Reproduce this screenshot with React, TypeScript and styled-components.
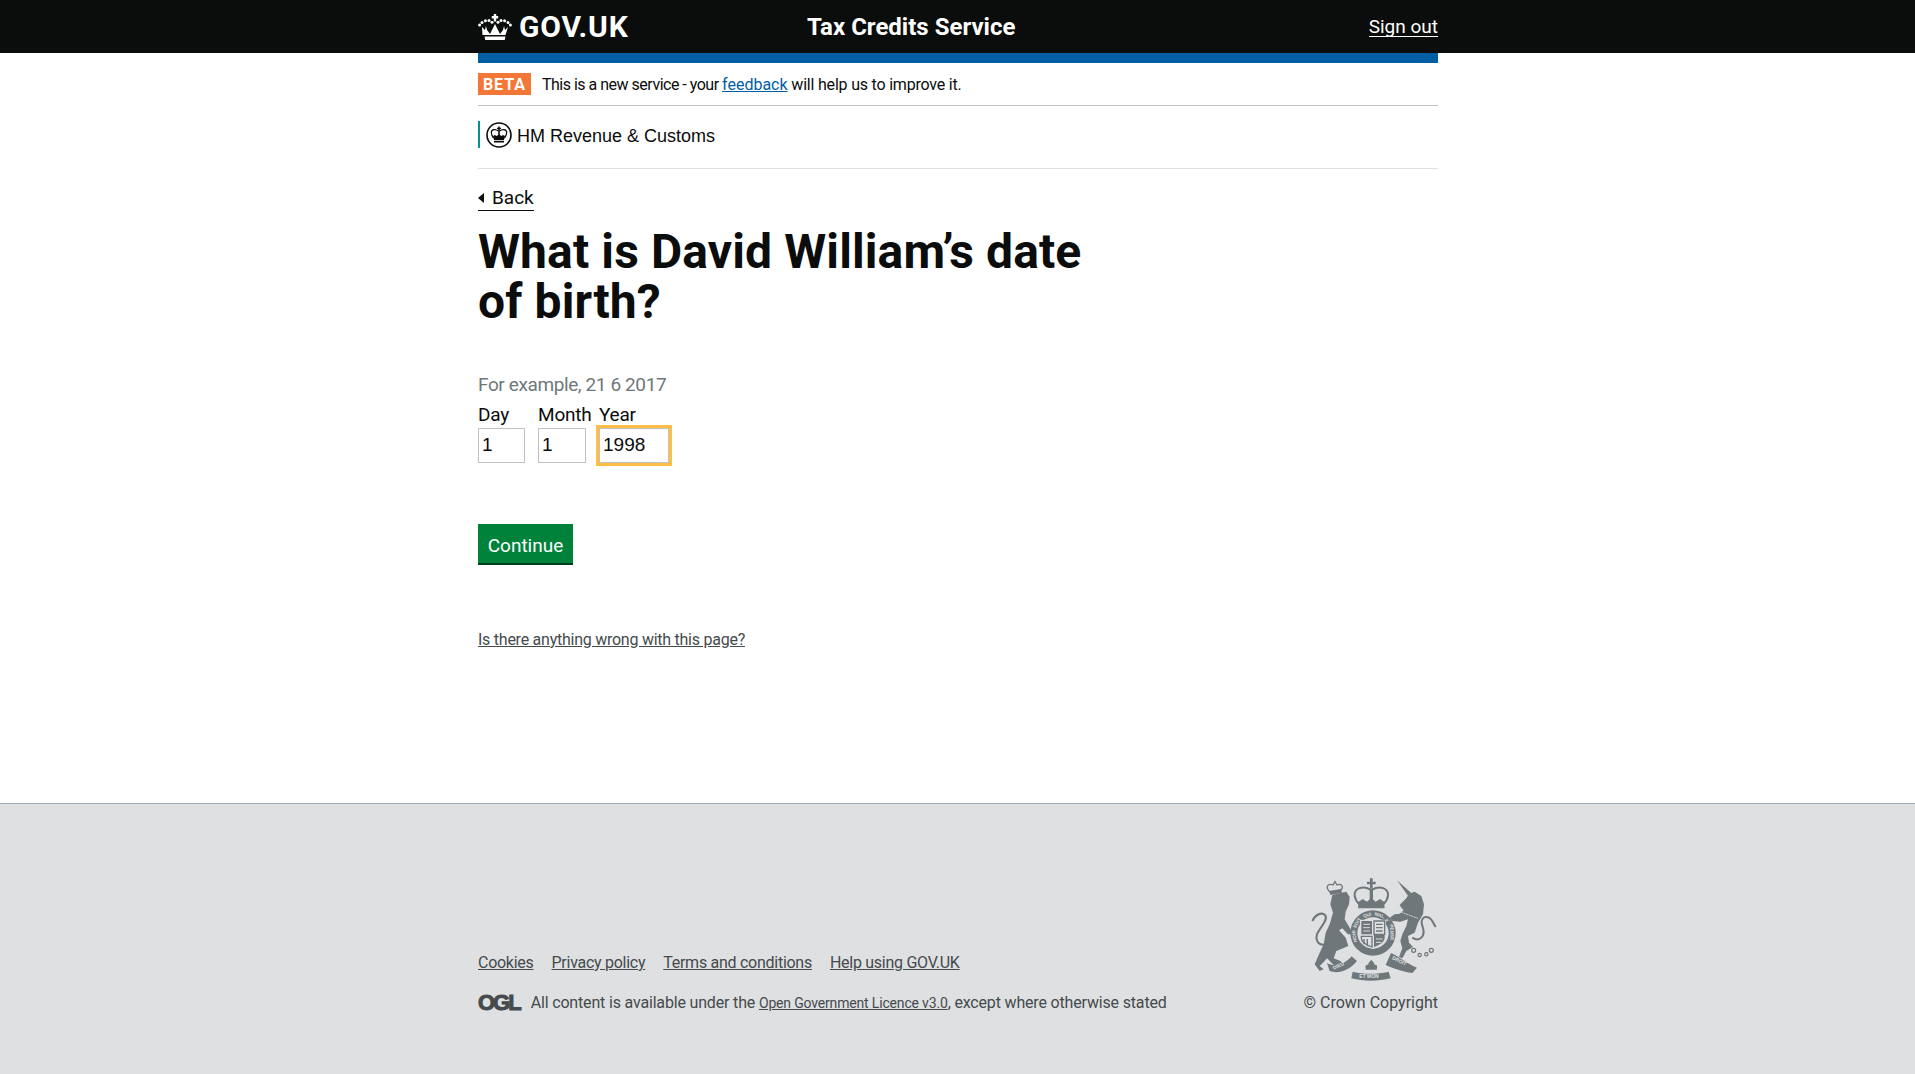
import styled, { createGlobalStyle } from "styled-components";

const GlobalStyle = createGlobalStyle`
  html, body { margin: 0; padding: 0; background: #fff; }
  body { font-family: Roboto, "Liberation Sans", sans-serif; color: #0b0c0c; }
`;

const Page = styled.div`
  display: flex;
  flex-direction: column;
  min-height: 1074px;
`;

const Wrap = styled.div`
  width: 960px;
  margin: 0 auto 0 478px;
`;

const TopBar = styled.header`
  background: #0b0c0c;
  height: 53px;
  color: #fff;
`;

const TopInner = styled(Wrap)`
  display: flex;
  align-items: center;
  height: 53px;
`;

const Brand = styled.div`
  display: flex;
  align-items: center;
  gap: 7px;
  width: 329px;
  font-size: 30px;
  font-weight: 700;
  letter-spacing: 0.8px;
`;

const ServiceName = styled.div`
  font-size: 24px;
  font-weight: 700;
  flex: 1;
`;

const SignOut = styled.a`
  font-size: 19px;
  color: #fff;
  text-decoration: none;
  border-bottom: 1px solid #fff;
  line-height: 19px;
`;

const BlueBar = styled(Wrap)`
  height: 10px;
  background: #005ea5;
`;

const BetaRow = styled(Wrap)`
  display: flex;
  align-items: center;
  height: 42px;
  border-bottom: 1px solid #bfc1c3;
  font-size: 16px;
  letter-spacing: -0.5px;
`;

const BetaTag = styled.span`
  background: #f47738;
  color: #fff;
  font-weight: 700;
  font-size: 16px;
  letter-spacing: 1px;
  width: 53px;
  height: 22px;
  line-height: 23px;
  text-align: center;
  margin-right: 11px;
`;

const FeedbackLink = styled.a`
  color: #005ea5;
  text-decoration: underline;
  letter-spacing: 0;
`;

const BetaTail = styled.span`
  letter-spacing: -0.2px;
`;

const DeptRow = styled(Wrap)`
  box-sizing: border-box;
  height: 63px;
  padding-top: 15px;
  border-bottom: 1px solid #dee0e2;
`;

const DeptMark = styled.div`
  display: flex;
  align-items: center;
  gap: 5px;
  border-left: 2px solid #009390;
  padding-left: 6px;
  height: 27px;
  font-family: "Liberation Sans", Arial, sans-serif;
  font-size: 18px;
`;

const DeptName = styled.span`
  padding-top: 3px;
`;

const Main = styled(Wrap)`
  padding-top: 17px;
  flex: 1;
`;

const BackLink = styled.a`
  display: inline-block;
  position: relative;
  font-size: 19px;
  line-height: 24px;
  padding-left: 14px;
  color: #0b0c0c;
  border-bottom: 1px solid #0b0c0c;
  &::before {
    content: "";
    position: absolute;
    left: 0;
    top: 7px;
    border-style: solid;
    border-width: 5px 6px 5px 0;
    border-color: transparent #0b0c0c transparent transparent;
  }
`;

const Heading = styled.h1`
  width: 640px;
  margin: 16px 0 0;
  font-size: 48px;
  line-height: 50px;
  font-weight: 700;
  letter-spacing: 0.12px;
`;

const Hint = styled.div`
  margin-top: 45px;
  font-size: 19px;
  line-height: 25px;
  color: #6f777b;
  letter-spacing: -0.39px;
`;

const DateFields = styled.div`
  display: flex;
  margin-top: 5px;
`;

const Field = styled.label<{ $width: number }>`
  display: flex;
  flex-direction: column;
  width: ${(p) => p.$width}px;
  font-size: 19px;
  line-height: 25px;
  letter-spacing: -0.2px;
`;

const Input = styled.input<{ $width: number; $focused?: boolean }>`
  box-sizing: border-box;
  width: ${(p) => p.$width}px;
  height: 35px;
  margin-top: 1px;
  padding: 0 3px 2px;
  border: 1px solid #bfc1c3;
  font-family: "Liberation Sans", Arial, sans-serif;
  font-size: 19px;
  color: #0b0c0c;
  background: #fff;
  outline: ${(p) => (p.$focused ? "3px solid #ffbf47" : "none")};
`;

const ContinueButton = styled.button`
  display: block;
  margin-top: 61px;
  width: 95px;
  height: 41px;
  padding: 2px 0 0;
  border: 0;
  box-shadow: inset 0 -2px 0 #00401e;
  background: #00823b;
  color: #fff;
  font-family: inherit;
  font-size: 19px;
`;

const ProblemLink = styled.a`
  display: inline-block;
  margin-top: 65px;
  font-size: 16px;
  line-height: 19px;
  color: #454a4c;
  text-decoration: underline;
  letter-spacing: -0.25px;
`;

const Footer = styled.footer`
  box-sizing: border-box;
  height: 271px;
  background: #dee0e2;
  border-top: 1px solid #a1acb2;
`;

const FooterInner = styled(Wrap)`
  display: flex;
  justify-content: space-between;
  align-items: flex-end;
  height: 100%;
  padding-bottom: 62px;
  box-sizing: border-box;
  color: #454a4c;
  font-size: 16px;
`;

const FooterLinks = styled.div`
  display: flex;
  gap: 18px;
  margin-bottom: 21px;
  letter-spacing: -0.27px;
`;

const FooterLink = styled.a<{ $small?: boolean }>`
  color: #454a4c;
  text-decoration: underline;
  font-size: ${(p) => (p.$small ? "14px" : "16px")};
`;

const LicenceRow = styled.div`
  display: flex;
  align-items: center;
  gap: 11px;
  letter-spacing: -0.17px;
`;

const Ogl = styled.span`
  font-family: "Liberation Sans", Arial, sans-serif;
  font-weight: 700;
  font-size: 22px;
  letter-spacing: -2px;
  color: #454a4c;
  line-height: 18px;
  -webkit-text-stroke: 1px #454a4c;
`;

const Copyright = styled.div`
  display: flex;
  flex-direction: column;
  align-items: flex-end;
  gap: 12px;
`;

function CrownLogo() {
  const dots = [
    [1.6, 11], [4, 8.4], [7.4, 6.8], [11, 6.4], [14, 8.2],
    [20, 8.2], [23, 6.4], [26.6, 6.8], [30, 8.4], [32.4, 11],
  ];
  return (
    <svg width="34" height="26" viewBox="0 0 34 26" fill="#fff">
      <path d="M15.8 0h2.4v2h2v2.4h-2v3h-2.4v-3h-2V2h2z" />
      {dots.map(([cx, cy]) => (
        <circle key={cx} cx={cx} cy={cy} r="1.5" />
      ))}
      <path d="M4 13l3 3 1-4 1 4 3 4 2-4 3-6 3 6 2 4 3-4 1-4 1 4 3-3-2.500 8h-23z" />
      <path d="M6.500 22.500h21l-.8 3.500H7.300z" />
    </svg>
  );
}

function DeptCrest() {
  return (
    <svg width="26" height="26" viewBox="0 0 26 26" fill="#0b0c0c">
      <circle cx="13" cy="13" r="12" fill="#fff" stroke="#0b0c0c" strokeWidth="1.6" />
      <path d="M12.200 4.500h1.600v1.300h1.200v1.300h-1.200v5.900h-1.600V7.100H11V5.800h1.200z" />
      <path d="M12.500 9C10 6.800 5.500 7 5.300 10.200c-.1 1.800.9 3.600 2 5.800M13.500 9c2.500-2.200 7-2 7.200 1.200.1 1.800-.9 3.600-2 5.800" fill="none" stroke="#0b0c0c" strokeWidth="1.2" />
      <path d="M7 14l2-1 1.500 1L13 12.500 15.500 14l1.500-1 2 1-1 4H8z" />
      <path d="M8 18.800h10v1.700H8z" />
    </svg>
  );
}

const armsGrey = "#6f777b";
const armsBack = "#dee0e2";

// words of the garter motto, each turned to its place round the ring
const garterWords: [string, number][] = [
  ["HONI", -100],
  ["SOIT", -58],
  ["QUI", -18],
  ["MAL", 20],
  ["Y", 48],
  ["PENSE", 88],
];

function RoyalArms() {
  return (
    <svg width="127" height="104" viewBox="0 0 127 104" fill={armsGrey} fontFamily="Liberation Sans, sans-serif">
      {/* lion, left half */}
      <g transform="translate(-8 -6) scale(.3333)">
        <path d="M88 72L112 66 130 62 140 78 138 100 128 122 125 145 140 170 150 190 135 190 118 172 108 178 128 200 136 225 120 232 100 240 92 262 112 270 130 290 120 298 92 282 72 262 60 275 50 285 62 295 50 300 35 280 50 245 62 220 68 185 80 160 90 125 82 100Z" />
        <path d="M28 150C36 132 54 122 66 132 78 145 50 170 42 190 36 212 50 225 68 220" fill="none" stroke={armsGrey} strokeWidth="6" />
        <path d="M80 62C66 48 74 36 90 42L96 32 102 42C114 36 124 46 113 58" fill="none" stroke={armsGrey} strokeWidth="4" />
        <path d="M78 60L114 54 117 65 82 72Z" />
        <path d="M72 276C95 290 125 280 146 256L162 270C140 298 105 310 80 300Z" />
        <text x="92" y="296" fontSize="15" fontWeight="700" fill={armsBack} transform="rotate(-24 92 296)">DIEU</text>
      </g>
      {/* unicorn, right half */}
      <g transform="translate(62 -6) scale(.3333)">
        <path d="M72 28L115 66 105 74Z" />
        <path d="M80 102L100 82 108 68 125 62 145 75 153 100 150 130 135 155 125 185 105 195 108 215 120 228 100 240 88 262 78 258 88 232 82 210 88 190 100 165 105 145 82 152 58 150 50 140 65 130 80 128 92 118 85 110Z" />
        <path d="M85 124L135 142" stroke={armsBack} strokeWidth="2.5" strokeDasharray="6 2" />
        <path d="M118 200C140 215 160 195 148 165 142 148 150 132 168 140 178 145 180 155 188 168" fill="none" stroke={armsGrey} strokeWidth="6" />
        <g fill="none" stroke={armsGrey} strokeWidth="3.5">
          <circle cx="122" cy="238" r="6" />
          <circle cx="140" cy="252" r="5" />
          <circle cx="160" cy="250" r="5" />
          <circle cx="175" cy="238" r="6" />
        </g>
        <path d="M38 282L54 246C75 254 100 278 132 290L118 306C90 302 60 292 38 282Z" />
        <text x="56" y="264" fontSize="15" fontWeight="700" fill={armsBack} transform="rotate(26 56 264)">DROIT</text>
      </g>
      {/* crown, garter and shield */}
      <g transform="translate(-23 -18) scale(.3333)">
        <path d="M246 58h8v10h9v8h-9v12h-8V76h-9v-8h9z" />
        <path d="M247 92C225 78 198 88 200 110 201 122 208 130 214 136M253 92C275 78 302 88 300 110 299 122 292 130 286 136" fill="none" stroke={armsGrey} strokeWidth="6" />
        <path d="M245 88h10v40h-10z" />
        <path d="M212 128l12-8 13 8 13-12 13 12 13-8 12 8 2 20h-80z" />
        <circle cx="255" cy="222" r="68" />
        <circle cx="255" cy="222" r="47" fill={armsBack} />
        {garterWords.map(([word, angle]) => (
          <text key={word} x="255" y="170" textAnchor="middle" fontSize="14" fontWeight="700" fill={armsBack} transform={`rotate(${angle} 255 222)`}>
            {word}
          </text>
        ))}
        <path d="M216 182h78v50c0 20-20 32-39 38-19-6-39-18-39-38z" fill={armsBack} />
        <path d="M220 186h32v40h-32zM258 226h32v10c0 12-15 22-32 28z" />
        <path d="M258 186h32v40h-32zM220 232h32v32c-17-6-32-16-32-28z" fill="none" stroke={armsGrey} strokeWidth="4" />
        <path d="M226 196h20M226 206h20M226 216h20M264 240h20M264 250h16" stroke={armsBack} strokeWidth="3" />
        <path d="M264 196h20M264 206h20M264 216h20M228 240v16M238 240v20" stroke={armsGrey} strokeWidth="4" />
        <path d="M250 302c6 8 12 12 8 16 8-2 12 4 8 14h-32c-4-10 0-16 8-14-4-4 2-8 8-16z" />
        <path d="M194 338c34 8 72 8 108 0l6 20c-38 10-80 10-118 0z" />
        <text x="214" y="356" fontSize="15" fontWeight="700" fill={armsBack}>ET MON</text>
      </g>
    </svg>
  );
}

export default function App() {
  return (
    <Page>
      <GlobalStyle />
      <TopBar>
        <TopInner>
          <Brand>
            <CrownLogo />
            GOV.UK
          </Brand>
          <ServiceName>Tax Credits Service</ServiceName>
          <SignOut>Sign out</SignOut>
        </TopInner>
      </TopBar>
      <BlueBar />
      <BetaRow>
        <BetaTag>BETA</BetaTag>
        <span>
          This is a new service - your <FeedbackLink>feedback</FeedbackLink>
          <BetaTail> will help us to improve it.</BetaTail>
        </span>
      </BetaRow>
      <DeptRow>
        <DeptMark>
          <DeptCrest />
          <DeptName>HM Revenue &amp; Customs</DeptName>
        </DeptMark>
      </DeptRow>
      <Main>
        <BackLink>Back</BackLink>
        <Heading>What is David William’s date of birth?</Heading>
        <Hint>For example, 21 6 2017</Hint>
        <DateFields>
          <Field $width={60}>
            Day
            <Input $width={47} defaultValue="1" />
          </Field>
          <Field $width={61}>
            Month
            <Input $width={48} defaultValue="1" />
          </Field>
          <Field $width={76}>
            Year
            <Input $width={70} $focused defaultValue="1998" />
          </Field>
        </DateFields>
        <ContinueButton>Continue</ContinueButton>
        <ProblemLink>Is there anything wrong with this page?</ProblemLink>
      </Main>
      <Footer>
        <FooterInner>
          <div>
            <FooterLinks>
              <FooterLink>Cookies</FooterLink>
              <FooterLink>Privacy policy</FooterLink>
              <FooterLink>Terms and conditions</FooterLink>
              <FooterLink>Help using GOV.UK</FooterLink>
            </FooterLinks>
            <LicenceRow>
              <Ogl>OGL</Ogl>
              <span>
                All content is available under the <FooterLink $small>Open Government Licence v3.0</FooterLink>, except where otherwise stated
              </span>
            </LicenceRow>
          </div>
          <Copyright>
            <RoyalArms />
            <span>© Crown Copyright</span>
          </Copyright>
        </FooterInner>
      </Footer>
    </Page>
  );
}
